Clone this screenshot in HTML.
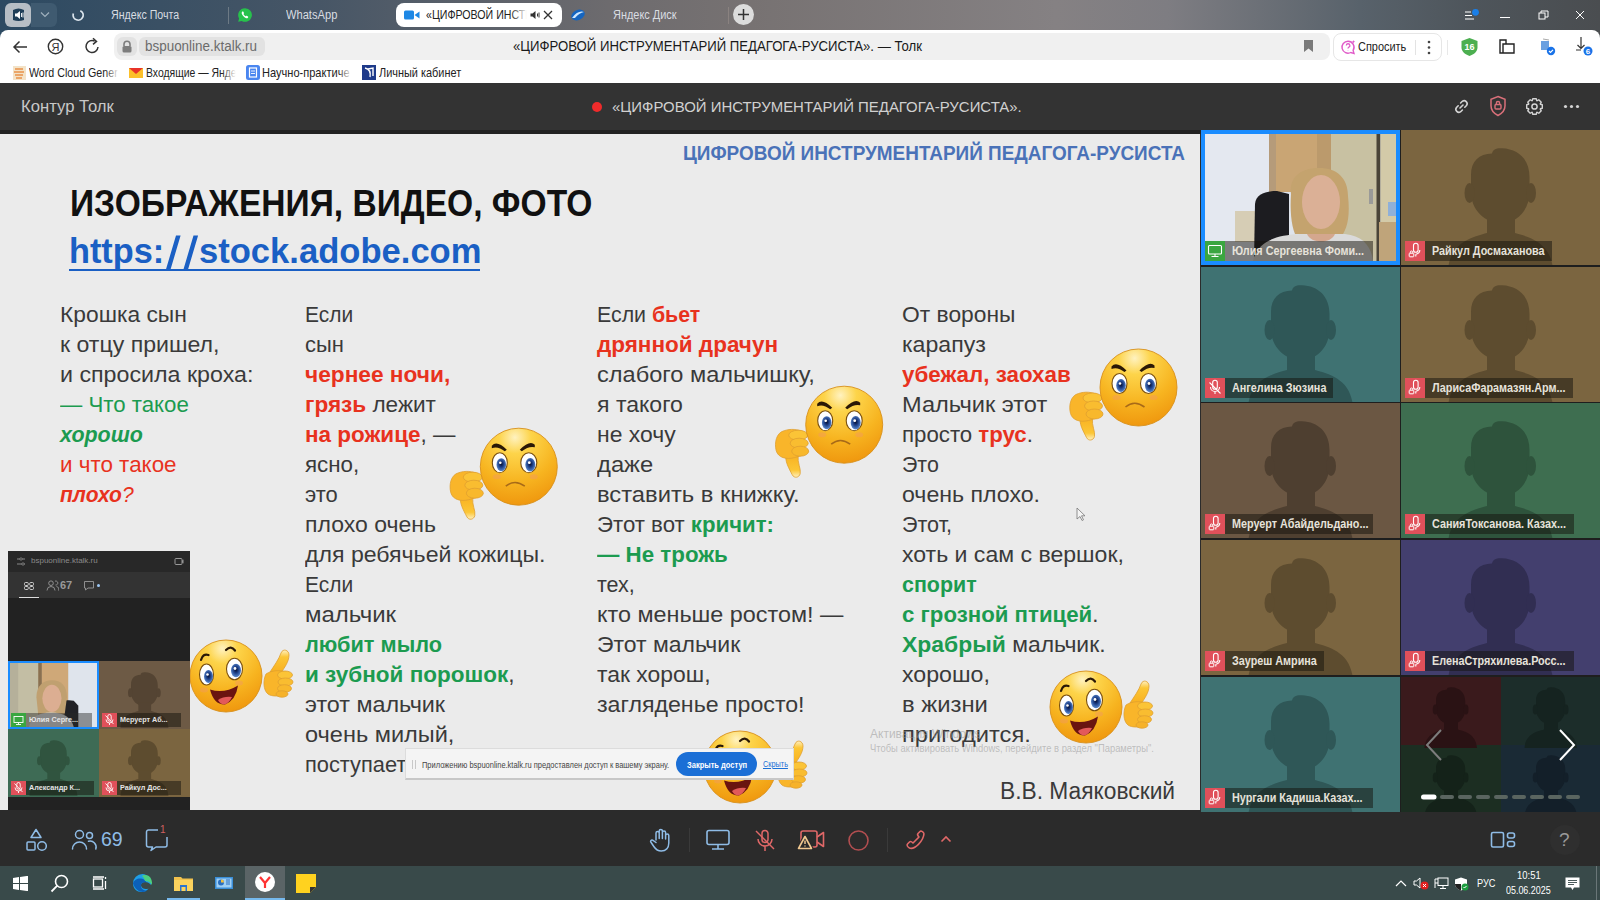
<!DOCTYPE html>
<html><head><meta charset="utf-8">
<style>
*{margin:0;padding:0;box-sizing:border-box}
html,body{width:1600px;height:900px;overflow:hidden;background:#2b2b2b;font-family:"Liberation Sans",sans-serif}
.abs{position:absolute}
#tabs{left:0;top:0;width:1600px;height:40px;background:linear-gradient(90deg,#2d4a62 0%,#475666 20%,#6d6b6e 38%,#777272 47%,#858183 66%,#7e7d82 73%,#58626b 85%,#4e555b 92%,#4a4d50 100%)}
.tab{position:absolute;top:0;height:30px;color:#d9dde2;font-size:12.5px;line-height:30px;white-space:nowrap;transform-origin:0 0}
#chrome{left:0;top:30px;width:1600px;height:53px;background:#fff;border-radius:8px 8px 0 0}
.bm{font-size:13px;line-height:20px;color:#222;white-space:nowrap;transform-origin:0 0}
#hdr{left:0;top:83px;width:1600px;height:47px;background:#333333}
#strip{left:0;top:130px;width:1201px;height:4px;background:#222}
#slide{left:0;top:134px;width:1200px;height:676px;background:#ebebeb;overflow:hidden}
.ln{position:absolute;white-space:nowrap;font-size:22.5px;line-height:0;color:#3a3a3a;transform-origin:0 0}
#grid{left:1201px;top:130px;width:399px;height:682px;background:#1e1e1e}
.lbl{font-size:12px;line-height:20.5px;font-weight:bold;color:#e6e2da;white-space:nowrap;transform:scaleX(0.9);transform-origin:0 0}
.mlbl{font-size:8px;line-height:14px;font-weight:bold;color:#e5e5e5;white-space:nowrap;transform:scaleX(0.9);transform-origin:0 0}
#toolbar{left:0;top:812px;width:1600px;height:54px;background:#2b2b2b}
#taskbar{left:0;top:866px;width:1600px;height:34px;background:#394a4a}
</style></head><body>
<svg width="0" height="0" style="position:absolute">
 <defs>
  <radialGradient id="fg" cx="0.45" cy="0.12" r="0.95">
   <stop offset="0" stop-color="#fff2c0"/>
   <stop offset="0.22" stop-color="#fdd44a"/>
   <stop offset="0.6" stop-color="#f7b420"/>
   <stop offset="0.9" stop-color="#f09a10"/>
   <stop offset="1" stop-color="#e88a0a"/>
  </radialGradient>
  <linearGradient id="hg" x1="0" y1="0" x2="0" y2="1">
   <stop offset="0" stop-color="#f8b020"/>
   <stop offset="0.7" stop-color="#fcc635"/>
   <stop offset="1" stop-color="#fff0c0"/>
  </linearGradient>
  <linearGradient id="hg2" x1="0" y1="1" x2="0" y2="0">
   <stop offset="0" stop-color="#f8b020"/>
   <stop offset="0.7" stop-color="#fcc635"/>
   <stop offset="1" stop-color="#fff0c0"/>
  </linearGradient>
  <radialGradient id="eyeg" cx="0.5" cy="0.45" r="0.55">
   <stop offset="0" stop-color="#081030"/>
   <stop offset="0.4" stop-color="#1a3a80"/>
   <stop offset="1" stop-color="#5a8ad0"/>
  </radialGradient>
  <g id="angry">
   <g stroke="#e0a030" stroke-width="0.8">
    <path d="M-58 29 C-60 36 -55 44 -52 50 C-50 54 -45 53 -44 49 C-43 44 -47 38 -46 31 Z" fill="url(#hg)"/>
    <path d="M-60 6 C-68 8 -70 18 -68 26 C-66 33 -58 35 -50 33 L-40 30 L-40 8 C-46 4 -54 4 -60 6Z" fill="#f9b52a"/>
    <ellipse cx="-46" cy="10.5" rx="9.5" ry="5" fill="#fbc437"/>
    <ellipse cx="-45" cy="18.5" rx="9" ry="5" fill="#f9bd30"/>
    <ellipse cx="-44" cy="26.5" rx="8.5" ry="5" fill="#f8b82c"/>
   </g>
   <circle r="38.5" fill="url(#fg)" stroke="#d8901a" stroke-width="0.9"/>
   <path d="M-27 -21 Q-22 -27 -12 -17 L-14 -15.5 Q-21 -21 -27 -18.5Z" fill="#2a1806"/>
   <path d="M16 -22 Q11 -27 1 -17 L3 -15.5 Q10 -21 16 -19.5Z" fill="#2a1806"/>
   <ellipse cx="-19" cy="-4" rx="7.5" ry="10" fill="#fff" stroke="#7a5010" stroke-width="1.1"/>
   <ellipse cx="10" cy="-4" rx="8" ry="10" fill="#fff" stroke="#7a5010" stroke-width="1.1"/>
   <ellipse cx="-17.5" cy="-2" rx="4.8" ry="6.5" fill="url(#eyeg)"/>
   <ellipse cx="11.5" cy="-2" rx="5" ry="6.8" fill="url(#eyeg)"/>
   <circle cx="-18.5" cy="-4" r="1.3" fill="#fff"/>
   <circle cx="10.5" cy="-4" r="1.4" fill="#fff"/>
   <ellipse cx="-22" cy="10" rx="4" ry="2.5" fill="#f29a60" opacity="0.45"/>
   <ellipse cx="15" cy="10" rx="4" ry="2.5" fill="#f29a60" opacity="0.45"/>
   <path d="M-13 19.5 Q-4 12 6 19.5" stroke="#a86a18" stroke-width="1.6" fill="none"/>
  </g>
  <g id="happy">
   <g stroke="#e0a030" stroke-width="0.8">
    <path d="M44 -4 C48 -10 53 -17 55 -23 C57 -28 63 -26 63 -21 C63 -14 58 -8 55 -3 Z" fill="url(#hg2)"/>
    <path d="M40 -2 C37 4 37 14 42 18 C46 21 54 20 58 19 L60 -4 C54 -6 46 -6 40 -2Z" fill="#f9b52a"/>
    <ellipse cx="59" cy="-1" rx="7.5" ry="4" fill="#fbc437"/>
    <ellipse cx="59.5" cy="6" rx="7.5" ry="4" fill="#f9bd30"/>
    <ellipse cx="58.5" cy="12.5" rx="7" ry="3.8" fill="#f8b82c"/>
    <ellipse cx="56" cy="18" rx="6" ry="3.2" fill="#f6b22a"/>
   </g>
   <circle r="36" fill="url(#fg)" stroke="#d8901a" stroke-width="0.9"/>
   <path d="M-25 -16 Q-23 -23 -17.5 -21" stroke="#2a1806" stroke-width="2.2" fill="none" stroke-linecap="round"/>
   <path d="M0 -26 Q5 -31 9 -25.5" stroke="#2a1806" stroke-width="2.2" fill="none" stroke-linecap="round"/>
   <ellipse cx="-19.5" cy="-1.5" rx="7" ry="10.5" fill="#fff" stroke="#7a5010" stroke-width="1.1"/>
   <ellipse cx="8.5" cy="-7" rx="8" ry="10.7" fill="#fff" stroke="#7a5010" stroke-width="1.1"/>
   <ellipse cx="-17.5" cy="0.5" rx="4.5" ry="6.5" fill="url(#eyeg)"/>
   <ellipse cx="10" cy="-5.5" rx="5" ry="6.7" fill="url(#eyeg)"/>
   <circle cx="-18.5" cy="-1.5" r="1.3" fill="#fff"/>
   <circle cx="9" cy="-7.5" r="1.4" fill="#fff"/>
   <ellipse cx="-22" cy="14" rx="4" ry="2.5" fill="#f29a60" opacity="0.45"/>
   <ellipse cx="13" cy="7" rx="4" ry="2.5" fill="#f29a60" opacity="0.45"/>
   <path d="M-16 13.5 Q-2 18 12 9.5 Q10 24 -1 28.5 Q-12 29 -16 13.5Z" fill="#6a1410"/>
   <path d="M-8 24 Q-2 20 6 21 Q3 27.5 -2 28.5 Q-6 28 -8 24Z" fill="#e25a5a"/>
  </g>
 </defs>
</svg>

<!-- TAB BAR -->
<div id="tabs" class="abs">
 <div class="abs" style="left:5px;top:3px;width:26px;height:24px;background:#b7bec5;border-radius:6px"></div>
 <div class="abs" style="left:31px;top:3px;width:26px;height:24px;background:#3f5a70;border-radius:0 6px 6px 0"></div>
 <svg class="abs" style="left:11px;top:8px" width="15" height="14" viewBox="0 0 15 14"><path d="M2 2 Q7.5 -1 13 2 L13 12 Q7.5 14 2 12Z" fill="#1f3e57"/><path d="M4 5.5h2l3-2.5v8l-3-2.5h-2z" fill="#fff"/><path d="M10.5 5v4M12 4.5v5" stroke="#fff" stroke-width="0.9"/></svg>
 <svg class="abs" style="left:40px;top:11px" width="10" height="7" viewBox="0 0 10 7"><path d="M1 1.5l4 4 4-4" stroke="#9fb0bd" stroke-width="1.2" fill="none"/></svg>
 <svg class="abs" style="left:72px;top:9px" width="13" height="13" viewBox="0 0 13 13"><path d="M10.5 3.2A5 5 0 1 1 3 2.3" stroke="#dde6ee" stroke-width="1.7" fill="none" transform="rotate(-30 6.5 6.5)"/></svg>
 <div class="tab" style="left:111px;top:0;transform:scaleX(0.85)">Яндекс Почта</div>
 <div class="abs" style="left:228px;top:7px;width:1px;height:17px;background:#6d7a85"></div>
 <svg class="abs" style="left:237px;top:7px" width="16" height="16" viewBox="0 0 16 16"><path d="M8 1.2a6.8 6.8 0 0 0-5.9 10.2L1.2 14.8l3.5-.9A6.8 6.8 0 1 0 8 1.2z" fill="#27c24c"/><path d="M5.3 4.6c.3-.3.7-.3.9 0l.8 1.3c.1.3 0 .5-.2.7l-.4.4c.4.9 1.2 1.8 2.2 2.3l.4-.4c.2-.2.5-.3.7-.1l1.3.7c.3.2.3.6.1.9-.6.9-1.5 1.1-2.4.6-1.7-.9-3-2.2-3.8-3.9-.4-.9-.2-1.8.4-2.5z" fill="#fff"/></svg>
 <div class="tab" style="left:286px;top:0;transform:scaleX(0.89)">WhatsApp</div>
 <div class="abs" style="left:396px;top:3px;width:166px;height:24px;background:#fff;border-radius:8px"></div>
 <svg class="abs" style="left:404px;top:10px" width="16" height="10" viewBox="0 0 16 10"><rect x="0" y="0.5" width="10" height="9" rx="1.5" fill="#1e88e5"/><path d="M10.5 5l5-3.5v7z" fill="#1e88e5"/></svg>
 <div class="tab" style="left:426px;top:0;color:#222;width:118px;overflow:hidden;transform:scaleX(0.85)">«ЦИФРОВОЙ ИНСТРУМЕНТАРИЙ</div>
 <div class="abs" style="left:510px;top:5px;width:18px;height:20px;background:linear-gradient(90deg,rgba(255,255,255,0),#fff)"></div>
 <svg class="abs" style="left:530px;top:10px" width="11" height="10" viewBox="0 0 11 10"><path d="M0.5 3.5h2l3-2.5v8l-3-2.5h-2z" fill="#333"/><path d="M7.5 3.5v3M9 2.5v5" stroke="#333" stroke-width="1"/></svg>
 <svg class="abs" style="left:543px;top:10px" width="10" height="10" viewBox="0 0 10 10"><path d="M1 1l8 8M9 1l-8 8" stroke="#333" stroke-width="1.3"/></svg>
 <svg class="abs" style="left:570px;top:8px" width="16" height="14" viewBox="0 0 16 14"><ellipse cx="8" cy="7" rx="7" ry="5" fill="#1565c0" transform="rotate(-25 8 7)"/><path d="M2 10 Q8 2 14 4 Q9 5 5 10z" fill="#cfe8ff"/></svg>
 <div class="tab" style="left:613px;top:0;transform:scaleX(0.875)">Яндекс Диск</div>
 <div class="abs" style="left:728px;top:7px;width:1px;height:17px;background:#8a8280"></div>
 <div class="abs" style="left:733px;top:4px;width:21px;height:21px;background:#dcdcdc;border-radius:50%"></div>
 <svg class="abs" style="left:737px;top:8px" width="13" height="13" viewBox="0 0 13 13"><path d="M6.5 1v11M1 6.5h11" stroke="#333" stroke-width="1.5"/></svg>
 <svg class="abs" style="left:1463px;top:8px" width="20" height="14" viewBox="0 0 20 14"><path d="M2 4h6M2 7.5h7M2 11h9" stroke="#fff" stroke-width="1.2"/><circle cx="12.5" cy="4.3" r="3.4" fill="#1a7fe8"/></svg>
 <div class="abs" style="left:1500px;top:17px;width:10px;height:1.3px;background:#fff"></div>
 <svg class="abs" style="left:1538px;top:10px" width="11" height="10" viewBox="0 0 11 10"><rect x="1" y="3" width="6" height="6" fill="none" stroke="#fff" stroke-width="1"/><path d="M3 3V1h7v6H7" fill="none" stroke="#fff" stroke-width="1"/></svg>
 <svg class="abs" style="left:1575px;top:10px" width="10" height="10" viewBox="0 0 10 10"><path d="M1 1l8 8M9 1L1 9" stroke="#fff" stroke-width="1"/></svg>
</div>
<!-- ADDRESS + BOOKMARKS -->
<div id="chrome" class="abs">
 <svg class="abs" style="left:12px;top:10px" width="16" height="14" viewBox="0 0 16 14"><path d="M15 7H2M7.5 1.5L2 7l5.5 5.5" stroke="#333" stroke-width="1.5" fill="none"/></svg>
 <svg class="abs" style="left:47px;top:8px" width="17" height="17" viewBox="0 0 17 17"><circle cx="8.5" cy="8.5" r="7.2" fill="none" stroke="#333" stroke-width="1.4"/><text x="8.5" y="12.6" font-size="11" text-anchor="middle" fill="#333" font-family="Liberation Sans">Я</text></svg>
 <svg class="abs" style="left:84px;top:7px" width="17" height="18" viewBox="0 0 17 18"><path d="M14 10a6 6 0 1 1-3.2-5.8" stroke="#333" stroke-width="1.5" fill="none"/><path d="M9 1.2l3.5 3.2-3.5 3" stroke="#333" stroke-width="1.5" fill="none"/></svg>
 <div class="abs" style="left:114px;top:3px;width:1216px;height:27px;background:#f0f0f0;border-radius:8px"></div>
 <div class="abs" style="left:117px;top:7px;width:20px;height:19px;background:#e2e2e2;border-radius:6px"></div>
 <svg class="abs" style="left:121px;top:10px" width="12" height="13" viewBox="0 0 12 13"><path d="M3 6V4.2a3 3 0 0 1 6 0V6" stroke="#7d7d7d" stroke-width="1.6" fill="none"/><rect x="1.5" y="6" width="9" height="6.5" rx="1.5" fill="#7d7d7d"/></svg>
 <div class="abs" style="left:139px;top:7px;width:126px;height:19px;background:#e2e2e2;border-radius:6px"></div>
 <div class="abs" style="left:145px;top:7px;font-size:14px;line-height:19px;color:#6b6b6b;white-space:nowrap;transform:scaleX(0.96);transform-origin:0 0">bspuonline.ktalk.ru</div>
 <div class="abs" style="left:513px;top:4.5px;font-size:15.5px;line-height:21px;color:#1a1a1a;white-space:nowrap;transform:scaleX(0.849);transform-origin:0 0">«ЦИФРОВОЙ ИНСТРУМЕНТАРИЙ ПЕДАГОГА-РУСИСТА». — Толк</div>
 <svg class="abs" style="left:1303px;top:9px" width="11" height="14" viewBox="0 0 11 14"><path d="M1 1h9v12l-4.5-3.5L1 13z" fill="#7a7a7a"/></svg>
 <div class="abs" style="left:1333px;top:3px;width:109px;height:28px;background:#fff;border:1px solid #e6e6e6;border-radius:8px"></div>
 <svg class="abs" style="left:1340px;top:9px" width="17" height="17" viewBox="0 0 17 17"><path d="M8 2.2a6 6 0 1 0 2.8 11.3l3.2.9-.9-3A6 6 0 0 0 8 2.2z" fill="none" stroke="#e05ac8" stroke-width="1.4"/><path d="M6.3 6.5a1.8 1.8 0 1 1 2.5 1.7c-.5.3-.8.6-.8 1.3M8 11.2v.3" stroke="#e05ac8" stroke-width="1.3" fill="none"/><path d="M13.5 1l.5 1.3 1.3.5-1.3.5-.5 1.3-.5-1.3-1.3-.5 1.3-.5z" fill="#e05ac8"/></svg>
 <div class="abs" style="left:1358px;top:7px;font-size:13.5px;line-height:19px;color:#222;white-space:nowrap;transform:scaleX(0.81);transform-origin:0 0">Спросить</div>
 <div class="abs" style="left:1415px;top:10px;width:1px;height:15px;background:#e3e3e3"></div>
 <svg class="abs" style="left:1427px;top:10px" width="4" height="15" viewBox="0 0 4 15"><circle cx="2" cy="2" r="1.3" fill="#444"/><circle cx="2" cy="7.5" r="1.3" fill="#444"/><circle cx="2" cy="13" r="1.3" fill="#444"/></svg>
 <div class="abs" style="left:1447px;top:10px;width:1px;height:15px;background:#e8e8e8"></div>
 <svg class="abs" style="left:1460px;top:7px" width="19" height="20" viewBox="0 0 19 20"><path d="M9.5 1l8 3v6.5c0 4-3.5 7-8 8.5C5 17.5 1.5 14.5 1.5 10.5V4z" fill="#4caf50"/><text x="9.5" y="12.5" font-size="9" font-weight="bold" text-anchor="middle" fill="#fff" font-family="Liberation Sans">16</text></svg>
 <svg class="abs" style="left:1498px;top:8px" width="18" height="17" viewBox="0 0 18 17"><path d="M2 2h6v4H5v9H2z M8 6h8v9H5" fill="none" stroke="#222" stroke-width="1.4"/></svg>
 <svg class="abs" style="left:1538px;top:6px" width="20" height="20" viewBox="0 0 20 20"><rect x="3" y="5" width="8" height="9" fill="#6aa0e0"/><path d="M5 3l6 1" stroke="#aaa"/><circle cx="13" cy="15" r="4.2" fill="#1a73e8"/><path d="M11 15l1.5 1.4 2.5-2.6" stroke="#fff" stroke-width="1.2" fill="none"/></svg>
 <svg class="abs" style="left:1575px;top:6px" width="20" height="22" viewBox="0 0 20 22"><path d="M6 1v11M2.5 9l3.5 3.5L9.5 9M1 14h5" stroke="#333" stroke-width="1.2" fill="none"/><circle cx="13" cy="15" r="4.5" fill="#1a73e8"/><text x="13" y="18.2" font-size="8" font-weight="bold" text-anchor="middle" fill="#fff" font-family="Liberation Sans">6</text></svg>
 <!-- bookmarks -->
 <svg class="abs" style="left:13px;top:36px" width="13" height="14" viewBox="0 0 13 14"><rect x="0" y="0" width="13" height="14" fill="#f3e3c8"/><path d="M2 3h8M1 6h10M2 9h8M3 12h6" stroke="#e9924a" stroke-width="1.6"/></svg>
 <div class="abs bm" style="left:29px;top:33px;width:108px;overflow:hidden;transform:scaleX(0.82)">Word Cloud Generator</div>
 <div class="abs" style="left:105px;top:35px;width:14px;height:16px;background:linear-gradient(90deg,rgba(255,255,255,0),#fff)"></div>
 <svg class="abs" style="left:129px;top:38px" width="14" height="10" viewBox="0 0 14 10"><rect width="14" height="10" fill="#fcc02a"/><path d="M0 0l7 6 7-6z" fill="#e8332a"/></svg>
 <div class="abs bm" style="left:146px;top:33px;width:112px;overflow:hidden;transform:scaleX(0.8)">Входящие — Яндекс Почта</div>
 <div class="abs" style="left:222px;top:35px;width:14px;height:16px;background:linear-gradient(90deg,rgba(255,255,255,0),#fff)"></div>
 <svg class="abs" style="left:246px;top:35px" width="14" height="15" viewBox="0 0 14 15"><rect x="0" y="0" width="14" height="15" rx="2.5" fill="#4a86f0"/><rect x="3.5" y="3" width="7" height="9" fill="none" stroke="#fff" stroke-width="1.2"/><path d="M5 6h4M5 8.5h4" stroke="#fff" stroke-width="0.9"/></svg>
 <div class="abs bm" style="left:262px;top:33px;width:103px;overflow:hidden;transform:scaleX(0.85)">Научно-практическая</div>
 <div class="abs" style="left:338px;top:35px;width:14px;height:16px;background:linear-gradient(90deg,rgba(255,255,255,0),#fff)"></div>
 <svg class="abs" style="left:362px;top:35px" width="14" height="15" viewBox="0 0 14 15"><rect width="14" height="15" fill="#1e3a8a"/><path d="M3 3c4 1 6 4 5 9M6 4l5-1v8" stroke="#fff" stroke-width="1.4" fill="none"/></svg>
 <div class="abs bm" style="left:379px;top:33px;transform:scaleX(0.84)">Личный кабинет</div>
</div>
<!-- KONTUR HEADER -->
<div id="hdr" class="abs">
 <div class="abs" style="left:21px;top:22.8px;font-size:16.5px;line-height:0;color:#c8c8c8;white-space:nowrap;transform:scaleX(1.01);transform-origin:0 0">Контур Толк</div>
 <div class="abs" style="left:592px;top:19px;width:10px;height:10px;border-radius:50%;background:#ef2b2b"></div>
 <div class="abs" style="left:612px;top:23.5px;font-size:14.5px;line-height:0;color:#d0d0d0;white-space:nowrap;transform:scaleX(1.03);transform-origin:0 0">«ЦИФРОВОЙ ИНСТРУМЕНТАРИЙ ПЕДАГОГА-РУСИСТА».</div>
 <svg class="abs" style="left:1452px;top:14px" width="19" height="19" viewBox="0 0 19 19"><path d="M8 11l3-3M6.2 8.8L4.5 10.5a3 3 0 0 0 4.2 4.2l1.7-1.7M12.8 10.2l1.7-1.7a3 3 0 0 0-4.2-4.2L8.6 6" stroke="#d4d4d4" stroke-width="1.6" fill="none" stroke-linecap="round"/></svg>
 <svg class="abs" style="left:1489px;top:12px" width="18" height="22" viewBox="0 0 18 22"><path d="M9 1.5l7 2.8v6.5c0 4.5-3 7.7-7 9.7-4-2-7-5.2-7-9.7V4.3z" fill="none" stroke="#d9707a" stroke-width="1.5"/><rect x="6" y="9.5" width="6" height="4.5" rx="1" fill="none" stroke="#d9707a" stroke-width="1.4"/><path d="M7.3 9.5V8.2a1.7 1.7 0 0 1 3.4 0v1.3" stroke="#d9707a" stroke-width="1.3" fill="none"/></svg>
 <svg class="abs" style="left:1525px;top:14px" width="19" height="19" viewBox="0 0 19 19"><path d="M15.40 7.28 L17.31 7.75 L17.31 11.25 L15.40 11.72 L15.24 12.10 L16.26 13.79 L13.79 16.26 L12.10 15.24 L11.72 15.40 L11.25 17.31 L7.75 17.31 L7.28 15.40 L6.90 15.24 L5.21 16.26 L2.74 13.79 L3.76 12.10 L3.60 11.72 L1.69 11.25 L1.69 7.75 L3.60 7.28 L3.76 6.90 L2.74 5.21 L5.21 2.74 L6.90 3.76 L7.28 3.60 L7.75 1.69 L11.25 1.69 L11.72 3.60 L12.10 3.76 L13.79 2.74 L16.26 5.21 L15.24 6.90Z" fill="none" stroke="#d4d4d4" stroke-width="1.4" stroke-linejoin="round"/><circle cx="9.5" cy="9.5" r="2.6" fill="none" stroke="#d4d4d4" stroke-width="1.5"/></svg>
 <svg class="abs" style="left:1563px;top:21px" width="18" height="5" viewBox="0 0 18 5"><circle cx="2.5" cy="2.5" r="1.6" fill="#d4d4d4"/><circle cx="8.5" cy="2.5" r="1.6" fill="#d4d4d4"/><circle cx="14.5" cy="2.5" r="1.6" fill="#d4d4d4"/></svg>
</div>

<div id="strip" class="abs"></div>
<!-- SLIDE -->
<div id="slide" class="abs">
 <div class="abs" style="left:683px;top:19.3px;font-size:21px;line-height:0;font-weight:bold;white-space:nowrap;transform:scaleX(0.902);transform-origin:0 0;color:#4a72b8">ЦИФРОВОЙ ИНСТРУМЕНТАРИЙ ПЕДАГОГА-РУСИСТА</div>
 <div class="abs" style="left:69.5px;top:69.0px;font-size:37.5px;line-height:0;font-weight:bold;white-space:nowrap;transform:scaleX(0.895);transform-origin:0 0;color:#111">ИЗОБРАЖЕНИЯ, ВИДЕО, ФОТО</div>
 <div class="abs" style="left:69px;top:116.9px;font-size:35px;line-height:0;font-weight:bold;white-space:nowrap;transform:scaleX(0.98);transform-origin:0 0;color:#1a5fc4">https:</div>
 <div class="abs" style="left:198.8px;top:116.9px;font-size:35px;line-height:0;font-weight:bold;white-space:nowrap;transform:scaleX(0.988);transform-origin:0 0;color:#1a5fc4">stock.adobe.com</div>
 <svg class="abs" style="left:160px;top:100px" width="45" height="40" viewBox="160 234 45 40"><path d="M166 269.2L170.6 269.2L180.6 235.6L176 235.6Z M183.5 269.2L188.1 269.2L198.1 235.6L193.5 235.6Z" fill="#1a5fc4"/></svg>
 <div class="abs" style="left:69px;top:134.5px;width:411px;height:2.3px;background:#1a5fc4"></div>
<div class="ln" style="left:60px;top:180.5px;transform:scaleX(1.013)">Крошка сын</div>
<div class="ln" style="left:60px;top:210.5px;transform:scaleX(1.027)">к отцу пришел,</div>
<div class="ln" style="left:60px;top:240.5px;transform:scaleX(1.032)">и спросила кроха:</div>
<div class="ln" style="left:60px;top:270.5px;transform:scaleX(0.989)"><span style="color:#1c9b50">— Что такое</span></div>
<div class="ln" style="left:60px;top:300.5px;transform:scaleX(0.953)"><span style="color:#1c9b50;font-weight:bold;font-style:italic">хорошо</span></div>
<div class="ln" style="left:60px;top:330.5px;transform:scaleX(0.996)"><span style="color:#e8321e">и что такое</span></div>
<div class="ln" style="left:60px;top:360.5px;transform:scaleX(0.934)"><span style="color:#e8321e;font-weight:bold;font-style:italic">плохо</span><span style="color:#e8321e;font-style:italic">?</span></div>
<div class="ln" style="left:305px;top:180.5px;transform:scaleX(0.930)">Если</div>
<div class="ln" style="left:305px;top:210.5px;transform:scaleX(0.975)">сын</div>
<div class="ln" style="left:305px;top:240.5px;transform:scaleX(1.008)"><span style="color:#e8321e;font-weight:bold">чернее ночи,</span></div>
<div class="ln" style="left:305px;top:270.5px;transform:scaleX(1.003)"><span style="color:#e8321e;font-weight:bold">грязь</span> лежит</div>
<div class="ln" style="left:305px;top:300.5px;transform:scaleX(0.998)"><span style="color:#e8321e;font-weight:bold">на рожице</span>, —</div>
<div class="ln" style="left:305px;top:330.5px;transform:scaleX(0.992)">ясно,</div>
<div class="ln" style="left:305px;top:360.5px;transform:scaleX(0.975)">это</div>
<div class="ln" style="left:305px;top:390.5px;transform:scaleX(1.023)">плохо очень</div>
<div class="ln" style="left:305px;top:420.5px;transform:scaleX(1.027)">для ребячьей кожицы.</div>
<div class="ln" style="left:305px;top:450.5px;transform:scaleX(0.930)">Если</div>
<div class="ln" style="left:305px;top:480.5px;transform:scaleX(1.065)">мальчик</div>
<div class="ln" style="left:305px;top:510.5px;transform:scaleX(0.966)"><span style="color:#1c9b50;font-weight:bold">любит мыло</span></div>
<div class="ln" style="left:305px;top:540.5px;transform:scaleX(1.001)"><span style="color:#1c9b50;font-weight:bold">и зубной порошок</span>,</div>
<div class="ln" style="left:305px;top:570.5px;transform:scaleX(1.037)">этот мальчик</div>
<div class="ln" style="left:305px;top:600.5px;transform:scaleX(1.046)">очень милый,</div>
<div class="ln" style="left:305px;top:630.5px;transform:scaleX(0.970)">поступает хорошо.</div>
<div class="ln" style="left:597px;top:180.5px;transform:scaleX(0.948)">Если <span style="color:#e8321e;font-weight:bold">бьет</span></div>
<div class="ln" style="left:597px;top:210.5px;transform:scaleX(1.000)"><span style="color:#e8321e;font-weight:bold">дрянной драчун</span></div>
<div class="ln" style="left:597px;top:240.5px;transform:scaleX(1.048)">слабого мальчишку,</div>
<div class="ln" style="left:597px;top:270.5px;transform:scaleX(1.025)">я такого</div>
<div class="ln" style="left:597px;top:300.5px;transform:scaleX(1.020)">не хочу</div>
<div class="ln" style="left:597px;top:330.5px;transform:scaleX(1.057)">даже</div>
<div class="ln" style="left:597px;top:360.5px;transform:scaleX(1.056)">вставить в книжку.</div>
<div class="ln" style="left:597px;top:390.5px;transform:scaleX(0.987)">Этот вот <span style="color:#1c9b50;font-weight:bold">кричит:</span></div>
<div class="ln" style="left:597px;top:420.5px;transform:scaleX(0.993)"><span style="color:#1c9b50;font-weight:bold">— Не трожь</span></div>
<div class="ln" style="left:597px;top:450.5px;transform:scaleX(0.956)">тех,</div>
<div class="ln" style="left:597px;top:480.5px;transform:scaleX(1.039)">кто меньше ростом! —</div>
<div class="ln" style="left:597px;top:510.5px;transform:scaleX(1.021)">Этот мальчик</div>
<div class="ln" style="left:597px;top:540.5px;transform:scaleX(1.018)">так хорош,</div>
<div class="ln" style="left:597px;top:570.5px;transform:scaleX(1.029)">загляденье просто!</div>
<div class="ln" style="left:902px;top:180.5px;transform:scaleX(1.014)">От вороны</div>
<div class="ln" style="left:902px;top:210.5px;transform:scaleX(1.027)">карапуз</div>
<div class="ln" style="left:902px;top:240.5px;transform:scaleX(0.995)"><span style="color:#e8321e;font-weight:bold">убежал, заохав</span></div>
<div class="ln" style="left:902px;top:270.5px;transform:scaleX(1.048)">Мальчик этот</div>
<div class="ln" style="left:902px;top:300.5px;transform:scaleX(0.988)">просто <span style="color:#e8321e;font-weight:bold">трус</span>.</div>
<div class="ln" style="left:902px;top:330.5px;transform:scaleX(0.950)">Это</div>
<div class="ln" style="left:902px;top:360.5px;transform:scaleX(1.028)">очень плохо.</div>
<div class="ln" style="left:902px;top:390.5px;transform:scaleX(0.958)">Этот,</div>
<div class="ln" style="left:902px;top:420.5px;transform:scaleX(1.025)">хоть и сам с вершок,</div>
<div class="ln" style="left:902px;top:450.5px;transform:scaleX(0.952)"><span style="color:#1c9b50;font-weight:bold">спорит</span></div>
<div class="ln" style="left:902px;top:480.5px;transform:scaleX(0.988)"><span style="color:#1c9b50;font-weight:bold">с грозной птицей</span>.</div>
<div class="ln" style="left:902px;top:510.5px;transform:scaleX(1.018)"><span style="color:#1c9b50;font-weight:bold">Храбрый</span> мальчик.</div>
<div class="ln" style="left:902px;top:540.5px;transform:scaleX(1.030)">хорошо,</div>
<div class="ln" style="left:902px;top:570.5px;transform:scaleX(1.059)">в жизни</div>
<div class="ln" style="left:902px;top:600.5px;transform:scaleX(1.052)">пригодится.</div>
 <div class="abs" style="left:1000px;top:656.5px;font-size:23px;line-height:0;white-space:nowrap;transform:scaleX(0.99);transform-origin:0 0;color:#3a3a3a">В.В. Маяковский</div>
 <div class="abs" style="left:870px;top:599.8px;font-size:12px;line-height:0;white-space:nowrap;transform:scaleX(1);transform-origin:0 0;color:rgba(150,150,150,0.55)">Активация Windows</div>
 <div class="abs" style="left:870px;top:614.5px;font-size:10px;line-height:0;white-space:nowrap;transform:scaleX(0.94);transform-origin:0 0;color:rgba(150,150,150,0.55)">Чтобы активировать Windows, перейдите в раздел "Параметры".</div>
</div>
<!-- EMOJIS -->
<svg class="abs" style="left:0;top:134px" width="1200" height="676" viewBox="0 134 1200 676">
 <use href="#angry" transform="translate(518.8 466.7) scale(1)"/>
 <use href="#angry" transform="translate(844.2 424.7) scale(1)"/>
 <use href="#angry" transform="translate(1138.5 387.5) scale(1)"/>
 <use href="#happy" transform="translate(226 676) scale(1)"/>
 <use href="#happy" transform="translate(1086 707) scale(1)"/>
 <use href="#happy" transform="translate(740 767) scale(1)"/>
</svg>
<!-- cursor -->
<svg class="abs" style="left:1076px;top:507px" width="10" height="15" viewBox="0 0 10 15"><path d="M1 1v11l3-2.5 2 4 1.5-.7-2-4H9z" fill="#f4f4f4" stroke="#777" stroke-width="0.8"/></svg>
<!-- NOTIFICATION BAR -->
<div class="abs" style="left:405px;top:748px;width:389px;height:32px;background:#f4f4f4;border:1px solid #dcdcdc;border-bottom:2px solid #c8c8c8">
 <div class="abs" style="left:6px;top:11px;width:4px;height:9px;border-left:1px solid #c8c8c8;border-right:1px solid #c8c8c8"></div>
 <div class="abs" style="left:16px;top:16px;font-size:8.6px;line-height:0;color:#444;white-space:nowrap;transform:scaleX(0.87);transform-origin:0 0">Приложению bspuonline.ktalk.ru предоставлен доступ к вашему экрану.</div>
 <div class="abs" style="left:270px;top:3px;width:81px;height:24px;background:#1b6fd6;border-radius:12px"></div>
 <div class="abs" style="left:281px;top:15.5px;font-size:8.6px;line-height:0;font-weight:bold;color:#fff;white-space:nowrap;transform:scaleX(0.875);transform-origin:0 0">Закрыть доступ</div>
 <div class="abs" style="left:357px;top:10px;font-size:8.6px;line-height:11px;color:#1b6fd6;text-decoration:underline;white-space:nowrap;transform:scaleX(0.85);transform-origin:0 0">Скрыть</div>
</div>

<!-- PARTICIPANTS GRID -->
<div id="grid" class="abs">
<div class="abs" style="left:0px;top:0px;width:199px;height:135px;background:#1a8cff">
 <svg class="abs" style="left:4px;top:4px" width="191" height="127" viewBox="0 0 191 127">
  <rect width="191" height="127" fill="#dfe4ec"/>
  <rect x="0" y="0" width="65" height="127" fill="#e4e8f0"/>
  <rect x="64" y="0" width="7" height="127" fill="#b59b7a"/>
  <rect x="71" y="0" width="42" height="58" fill="#c9a574"/>
  <rect x="112" y="0" width="14" height="127" fill="#bb9a6c"/>
  <rect x="126" y="0" width="46" height="127" fill="#c8c1a2"/>
  <rect x="171.5" y="0" width="4" height="127" fill="#4a4438"/>
  <rect x="175.5" y="0" width="15.5" height="127" fill="#d3caa8"/>
  <rect x="174" y="88" width="17" height="39" fill="#bfa47a"/>
  <rect x="183" y="68" width="8" height="14" fill="#8fb0d8"/>
  <rect x="164" y="55" width="4" height="15" fill="#9a9a98"/>
  <rect x="30" y="77" width="20" height="31" fill="#d6cdb5"/>
  <path d="M49 127 L50 70 C51 60 60 57 72 57 L84 60 L84 127Z" fill="#1c1c20"/>
  <path d="M86 60 C84 42 97 34 114 34 C132 34 143 44 143 62 C145 80 143 92 138 100 L90 100 C86 90 85 75 86 60Z" fill="#c4a36e"/>
  <ellipse cx="116" cy="68" rx="19" ry="27" fill="#dbb096"/>
  <path d="M48 127 C52 108 70 101 95 100 L140 100 C158 102 166 112 168 127Z" fill="#dadada"/>
  <path d="M102 100 C106 110 126 110 130 100Z" fill="#d4a78e"/>
 </svg>

 <svg class="abs" style="left:4px;top:111.3px" width="20" height="20" viewBox="0 0 20 20"><rect width="20" height="20" fill="#3aa640"/><rect x="3.5" y="4.5" width="13" height="8.5" rx="1" fill="none" stroke="#fff" stroke-width="1.1"/><path d="M10 13v2.5M6.5 15.5h7" stroke="#fff" stroke-width="1.1"/></svg>
 <div class="abs" style="left:24px;top:111.3px;width:148px;height:20px;background:rgba(20,18,12,0.5)"></div>
 <div class="abs lbl" style="left:31px;top:111.3px">Юлия Сергеевна Фоми...</div>
</div>
<div class="abs" style="left:200px;top:0px;width:199px;height:135px;background:#7b6540;overflow:hidden">
 <svg class="abs" style="left:0;top:0" width="199" height="136" viewBox="0 0 199 136"><g transform="translate(0 0) scale(1.0)" fill="#5d4c2f"><path d="M70 45C70 31 78 24 91 23.5C92 19.5 95 18 101 18.3C117 19 128.5 29 128.5 47L128.5 62C128.5 80 116 93 100 93C84 93 70 80 70 62Z"/><ellipse cx="68.5" cy="63" rx="5" ry="10"/><ellipse cx="130" cy="63" rx="5" ry="10"/><path d="M86 84L114 84L114 103C128 107 150 112 152 140L47 140C49 112 72 107 86 103Z"/></g></svg>

 <svg class="abs" style="left:4px;top:111.3px" width="20" height="20" viewBox="0 0 20 20"><rect width="20" height="20" fill="#e0505a"/><path d="M8.5 4.5a2.3 2.3 0 0 1 4.6 0v4.5a2.3 2.3 0 0 1-4.6 0z" fill="none" stroke="#fff" stroke-width="1.1"/><path d="M14.8 9a4 4 0 0 1-4 4.2M10.8 13.2v2.3" fill="none" stroke="#fff" stroke-width="1.1"/><rect x="4.2" y="12.2" width="4.6" height="3.6" rx="0.6" fill="none" stroke="#fff" stroke-width="1"/><path d="M5.3 12.2v-1a1.2 1.2 0 0 1 2.4 0v1" fill="none" stroke="#fff" stroke-width="1"/></svg>
 <div class="abs" style="left:24px;top:111.3px;width:127px;height:20px;background:rgba(20,18,12,0.5)"></div>
 <div class="abs lbl" style="left:31px;top:111.3px">Райкул Досмаханова</div>
</div>
<div class="abs" style="left:0px;top:137px;width:199px;height:135px;background:#3f7272;overflow:hidden">
 <svg class="abs" style="left:0;top:0" width="199" height="136" viewBox="0 0 199 136"><g transform="translate(0 0) scale(1.0)" fill="#2f5757"><path d="M70 45C70 31 78 24 91 23.5C92 19.5 95 18 101 18.3C117 19 128.5 29 128.5 47L128.5 62C128.5 80 116 93 100 93C84 93 70 80 70 62Z"/><ellipse cx="68.5" cy="63" rx="5" ry="10"/><ellipse cx="130" cy="63" rx="5" ry="10"/><path d="M86 84L114 84L114 103C128 107 150 112 152 140L47 140C49 112 72 107 86 103Z"/></g></svg>

 <svg class="abs" style="left:4px;top:111.3px" width="20" height="20" viewBox="0 0 20 20"><rect width="20" height="20" fill="#e0505a"/><path d="M7.7 4.5a2.3 2.3 0 0 1 4.6 0v4.5a2.3 2.3 0 0 1-4.6 0z" fill="none" stroke="#fff" stroke-width="1.1"/><path d="M5.5 9a4.5 4.5 0 0 0 9 0M10 13.5v2.5" fill="none" stroke="#fff" stroke-width="1.1"/><path d="M4.5 4.5l11 11" stroke="#fff" stroke-width="1.1"/></svg>
 <div class="abs" style="left:24px;top:111.3px;width:108px;height:20px;background:rgba(20,18,12,0.5)"></div>
 <div class="abs lbl" style="left:31px;top:111.3px">Ангелина Зюзина</div>
</div>
<div class="abs" style="left:200px;top:137px;width:199px;height:135px;background:#7b6540;overflow:hidden">
 <svg class="abs" style="left:0;top:0" width="199" height="136" viewBox="0 0 199 136"><g transform="translate(0 0) scale(1.0)" fill="#5d4c2f"><path d="M70 45C70 31 78 24 91 23.5C92 19.5 95 18 101 18.3C117 19 128.5 29 128.5 47L128.5 62C128.5 80 116 93 100 93C84 93 70 80 70 62Z"/><ellipse cx="68.5" cy="63" rx="5" ry="10"/><ellipse cx="130" cy="63" rx="5" ry="10"/><path d="M86 84L114 84L114 103C128 107 150 112 152 140L47 140C49 112 72 107 86 103Z"/></g></svg>

 <svg class="abs" style="left:4px;top:111.3px" width="20" height="20" viewBox="0 0 20 20"><rect width="20" height="20" fill="#e0505a"/><path d="M8.5 4.5a2.3 2.3 0 0 1 4.6 0v4.5a2.3 2.3 0 0 1-4.6 0z" fill="none" stroke="#fff" stroke-width="1.1"/><path d="M14.8 9a4 4 0 0 1-4 4.2M10.8 13.2v2.3" fill="none" stroke="#fff" stroke-width="1.1"/><rect x="4.2" y="12.2" width="4.6" height="3.6" rx="0.6" fill="none" stroke="#fff" stroke-width="1"/><path d="M5.3 12.2v-1a1.2 1.2 0 0 1 2.4 0v1" fill="none" stroke="#fff" stroke-width="1"/></svg>
 <div class="abs" style="left:24px;top:111.3px;width:148px;height:20px;background:rgba(20,18,12,0.5)"></div>
 <div class="abs lbl" style="left:31px;top:111.3px">ЛарисаФарамазян.Арм...</div>
</div>
<div class="abs" style="left:0px;top:273px;width:199px;height:135px;background:#6b5743;overflow:hidden">
 <svg class="abs" style="left:0;top:0" width="199" height="136" viewBox="0 0 199 136"><g transform="translate(0 0) scale(1.0)" fill="#4e3f30"><path d="M70 45C70 31 78 24 91 23.5C92 19.5 95 18 101 18.3C117 19 128.5 29 128.5 47L128.5 62C128.5 80 116 93 100 93C84 93 70 80 70 62Z"/><ellipse cx="68.5" cy="63" rx="5" ry="10"/><ellipse cx="130" cy="63" rx="5" ry="10"/><path d="M86 84L114 84L114 103C128 107 150 112 152 140L47 140C49 112 72 107 86 103Z"/></g></svg>

 <svg class="abs" style="left:4px;top:111.3px" width="20" height="20" viewBox="0 0 20 20"><rect width="20" height="20" fill="#e0505a"/><path d="M8.5 4.5a2.3 2.3 0 0 1 4.6 0v4.5a2.3 2.3 0 0 1-4.6 0z" fill="none" stroke="#fff" stroke-width="1.1"/><path d="M14.8 9a4 4 0 0 1-4 4.2M10.8 13.2v2.3" fill="none" stroke="#fff" stroke-width="1.1"/><rect x="4.2" y="12.2" width="4.6" height="3.6" rx="0.6" fill="none" stroke="#fff" stroke-width="1"/><path d="M5.3 12.2v-1a1.2 1.2 0 0 1 2.4 0v1" fill="none" stroke="#fff" stroke-width="1"/></svg>
 <div class="abs" style="left:24px;top:111.3px;width:148px;height:20px;background:rgba(20,18,12,0.5)"></div>
 <div class="abs lbl" style="left:31px;top:111.3px">Меруерт Абайдельдано...</div>
</div>
<div class="abs" style="left:200px;top:273px;width:199px;height:135px;background:#3e6e50;overflow:hidden">
 <svg class="abs" style="left:0;top:0" width="199" height="136" viewBox="0 0 199 136"><g transform="translate(0 0) scale(1.0)" fill="#2e533c"><path d="M70 45C70 31 78 24 91 23.5C92 19.5 95 18 101 18.3C117 19 128.5 29 128.5 47L128.5 62C128.5 80 116 93 100 93C84 93 70 80 70 62Z"/><ellipse cx="68.5" cy="63" rx="5" ry="10"/><ellipse cx="130" cy="63" rx="5" ry="10"/><path d="M86 84L114 84L114 103C128 107 150 112 152 140L47 140C49 112 72 107 86 103Z"/></g></svg>

 <svg class="abs" style="left:4px;top:111.3px" width="20" height="20" viewBox="0 0 20 20"><rect width="20" height="20" fill="#e0505a"/><path d="M8.5 4.5a2.3 2.3 0 0 1 4.6 0v4.5a2.3 2.3 0 0 1-4.6 0z" fill="none" stroke="#fff" stroke-width="1.1"/><path d="M14.8 9a4 4 0 0 1-4 4.2M10.8 13.2v2.3" fill="none" stroke="#fff" stroke-width="1.1"/><rect x="4.2" y="12.2" width="4.6" height="3.6" rx="0.6" fill="none" stroke="#fff" stroke-width="1"/><path d="M5.3 12.2v-1a1.2 1.2 0 0 1 2.4 0v1" fill="none" stroke="#fff" stroke-width="1"/></svg>
 <div class="abs" style="left:24px;top:111.3px;width:149px;height:20px;background:rgba(20,18,12,0.5)"></div>
 <div class="abs lbl" style="left:31px;top:111.3px">СанияТоксанова. Казах...</div>
</div>
<div class="abs" style="left:0px;top:410px;width:199px;height:135px;background:#7b6540;overflow:hidden">
 <svg class="abs" style="left:0;top:0" width="199" height="136" viewBox="0 0 199 136"><g transform="translate(0 0) scale(1.0)" fill="#5d4c2f"><path d="M70 45C70 31 78 24 91 23.5C92 19.5 95 18 101 18.3C117 19 128.5 29 128.5 47L128.5 62C128.5 80 116 93 100 93C84 93 70 80 70 62Z"/><ellipse cx="68.5" cy="63" rx="5" ry="10"/><ellipse cx="130" cy="63" rx="5" ry="10"/><path d="M86 84L114 84L114 103C128 107 150 112 152 140L47 140C49 112 72 107 86 103Z"/></g></svg>

 <svg class="abs" style="left:4px;top:111.3px" width="20" height="20" viewBox="0 0 20 20"><rect width="20" height="20" fill="#e0505a"/><path d="M8.5 4.5a2.3 2.3 0 0 1 4.6 0v4.5a2.3 2.3 0 0 1-4.6 0z" fill="none" stroke="#fff" stroke-width="1.1"/><path d="M14.8 9a4 4 0 0 1-4 4.2M10.8 13.2v2.3" fill="none" stroke="#fff" stroke-width="1.1"/><rect x="4.2" y="12.2" width="4.6" height="3.6" rx="0.6" fill="none" stroke="#fff" stroke-width="1"/><path d="M5.3 12.2v-1a1.2 1.2 0 0 1 2.4 0v1" fill="none" stroke="#fff" stroke-width="1"/></svg>
 <div class="abs" style="left:24px;top:111.3px;width:99px;height:20px;background:rgba(20,18,12,0.5)"></div>
 <div class="abs lbl" style="left:31px;top:111.3px">Зауреш Амрина</div>
</div>
<div class="abs" style="left:200px;top:410px;width:199px;height:135px;background:#433f6e;overflow:hidden">
 <svg class="abs" style="left:0;top:0" width="199" height="136" viewBox="0 0 199 136"><g transform="translate(0 0) scale(1.0)" fill="#312e52"><path d="M70 45C70 31 78 24 91 23.5C92 19.5 95 18 101 18.3C117 19 128.5 29 128.5 47L128.5 62C128.5 80 116 93 100 93C84 93 70 80 70 62Z"/><ellipse cx="68.5" cy="63" rx="5" ry="10"/><ellipse cx="130" cy="63" rx="5" ry="10"/><path d="M86 84L114 84L114 103C128 107 150 112 152 140L47 140C49 112 72 107 86 103Z"/></g></svg>

 <svg class="abs" style="left:4px;top:111.3px" width="20" height="20" viewBox="0 0 20 20"><rect width="20" height="20" fill="#e0505a"/><path d="M8.5 4.5a2.3 2.3 0 0 1 4.6 0v4.5a2.3 2.3 0 0 1-4.6 0z" fill="none" stroke="#fff" stroke-width="1.1"/><path d="M14.8 9a4 4 0 0 1-4 4.2M10.8 13.2v2.3" fill="none" stroke="#fff" stroke-width="1.1"/><rect x="4.2" y="12.2" width="4.6" height="3.6" rx="0.6" fill="none" stroke="#fff" stroke-width="1"/><path d="M5.3 12.2v-1a1.2 1.2 0 0 1 2.4 0v1" fill="none" stroke="#fff" stroke-width="1"/></svg>
 <div class="abs" style="left:24px;top:111.3px;width:149px;height:20px;background:rgba(20,18,12,0.5)"></div>
 <div class="abs lbl" style="left:31px;top:111.3px">ЕленаСтряхилева.Росс...</div>
</div>
<div class="abs" style="left:0px;top:547px;width:199px;height:135px;background:#3f7272;overflow:hidden">
 <svg class="abs" style="left:0;top:0" width="199" height="136" viewBox="0 0 199 136"><g transform="translate(0 0) scale(1.0)" fill="#2f5757"><path d="M70 45C70 31 78 24 91 23.5C92 19.5 95 18 101 18.3C117 19 128.5 29 128.5 47L128.5 62C128.5 80 116 93 100 93C84 93 70 80 70 62Z"/><ellipse cx="68.5" cy="63" rx="5" ry="10"/><ellipse cx="130" cy="63" rx="5" ry="10"/><path d="M86 84L114 84L114 103C128 107 150 112 152 140L47 140C49 112 72 107 86 103Z"/></g></svg>

 <svg class="abs" style="left:4px;top:111.3px" width="20" height="20" viewBox="0 0 20 20"><rect width="20" height="20" fill="#e0505a"/><path d="M8.5 4.5a2.3 2.3 0 0 1 4.6 0v4.5a2.3 2.3 0 0 1-4.6 0z" fill="none" stroke="#fff" stroke-width="1.1"/><path d="M14.8 9a4 4 0 0 1-4 4.2M10.8 13.2v2.3" fill="none" stroke="#fff" stroke-width="1.1"/><rect x="4.2" y="12.2" width="4.6" height="3.6" rx="0.6" fill="none" stroke="#fff" stroke-width="1"/><path d="M5.3 12.2v-1a1.2 1.2 0 0 1 2.4 0v1" fill="none" stroke="#fff" stroke-width="1"/></svg>
 <div class="abs" style="left:24px;top:111.3px;width:148px;height:20px;background:rgba(20,18,12,0.5)"></div>
 <div class="abs lbl" style="left:31px;top:111.3px">Нургали Кадиша.Казах...</div>
</div>
<div class="abs" style="left:200px;top:547px;width:199px;height:135px;overflow:hidden;background:#1c2d2a">
 <svg class="abs" style="left:0;top:0" width="199" height="135" viewBox="0 0 199 135">
  <rect x="0" y="0" width="100" height="68" fill="#3a1a1c"/>
  <rect x="100" y="0" width="99" height="68" fill="#1c2d2a"/>
  <rect x="0" y="68" width="100" height="67" fill="#1c2e22"/>
  <rect x="100" y="68" width="99" height="67" fill="#1a2a35"/>
  <g transform="translate(0 1) scale(0.5)" fill="#2a1214"><path d="M70 45C70 31 78 24 91 23.5C92 19.5 95 18 101 18.3C117 19 128.5 29 128.5 47L128.5 62C128.5 80 116 93 100 93C84 93 70 80 70 62Z"/><ellipse cx="68.5" cy="63" rx="5" ry="10"/><ellipse cx="130" cy="63" rx="5" ry="10"/><path d="M86 84L114 84L114 103C128 107 150 112 152 140L47 140C49 112 72 107 86 103Z"/></g><g transform="translate(100 1) scale(0.5)" fill="#152320"><path d="M70 45C70 31 78 24 91 23.5C92 19.5 95 18 101 18.3C117 19 128.5 29 128.5 47L128.5 62C128.5 80 116 93 100 93C84 93 70 80 70 62Z"/><ellipse cx="68.5" cy="63" rx="5" ry="10"/><ellipse cx="130" cy="63" rx="5" ry="10"/><path d="M86 84L114 84L114 103C128 107 150 112 152 140L47 140C49 112 72 107 86 103Z"/></g><g transform="translate(0 69) scale(0.5)" fill="#142219"><path d="M70 45C70 31 78 24 91 23.5C92 19.5 95 18 101 18.3C117 19 128.5 29 128.5 47L128.5 62C128.5 80 116 93 100 93C84 93 70 80 70 62Z"/><ellipse cx="68.5" cy="63" rx="5" ry="10"/><ellipse cx="130" cy="63" rx="5" ry="10"/><path d="M86 84L114 84L114 103C128 107 150 112 152 140L47 140C49 112 72 107 86 103Z"/></g><g transform="translate(100 69) scale(0.5)" fill="#131f29"><path d="M70 45C70 31 78 24 91 23.5C92 19.5 95 18 101 18.3C117 19 128.5 29 128.5 47L128.5 62C128.5 80 116 93 100 93C84 93 70 80 70 62Z"/><ellipse cx="68.5" cy="63" rx="5" ry="10"/><ellipse cx="130" cy="63" rx="5" ry="10"/><path d="M86 84L114 84L114 103C128 107 150 112 152 140L47 140C49 112 72 107 86 103Z"/></g>
  <path d="M40 53 L26 68 L40 83" stroke="#7d7d7d" stroke-width="2" fill="none"/>
  <path d="M159 53 L173 68 L159 83" stroke="#fff" stroke-width="2" fill="none"/>
  <rect x="20" y="117.5" width="15.5" height="5" rx="2.5" fill="#fff"/>
  <rect x="39" y="118" width="14" height="4" rx="2" fill="#5a6560"/><rect x="57" y="118" width="14" height="4" rx="2" fill="#5a6560"/><rect x="75" y="118" width="14" height="4" rx="2" fill="#5a6560"/><rect x="93" y="118" width="14" height="4" rx="2" fill="#5a6560"/><rect x="111" y="118" width="14" height="4" rx="2" fill="#5a6560"/><rect x="129" y="118" width="14" height="4" rx="2" fill="#5a6560"/><rect x="147" y="118" width="14" height="4" rx="2" fill="#5a6560"/><rect x="165" y="118" width="14" height="4" rx="2" fill="#5a6560"/>
 </svg>
</div>
</div>
<!-- MINI WINDOW -->
<div class="abs" style="left:8px;top:551px;width:182px;height:259px;background:#222;overflow:hidden">
 <div class="abs" style="left:0;top:0;width:182px;height:21px;background:#282828"></div>
 <svg class="abs" style="left:8px;top:6px" width="10" height="9" viewBox="0 0 10 9"><path d="M1 2h3M6 2h3M1 7h5M8 7h1" stroke="#888" stroke-width="1"/><circle cx="5" cy="2" r="1.2" fill="none" stroke="#888" stroke-width="0.8"/><circle cx="7" cy="7" r="1.2" fill="none" stroke="#888" stroke-width="0.8"/></svg>
 <div class="abs" style="left:23px;top:5px;font-size:8px;line-height:10px;color:#8a8a8a;white-space:nowrap">bspuonline.ktalk.ru</div>
 <svg class="abs" style="left:166px;top:6px" width="10" height="9" viewBox="0 0 10 9"><rect x="1" y="1.5" width="7" height="6" rx="1" fill="none" stroke="#999" stroke-width="1"/><path d="M8 3.5l1.5-1v4l-1.5-1" fill="#999"/></svg>
 <div class="abs" style="left:0;top:21px;width:182px;height:26px;background:#333"></div>
 <svg class="abs" style="left:16px;top:31px" width="10" height="8" viewBox="0 0 10 8"><rect x="0.5" y="0.5" width="3.8" height="3" rx="1" fill="none" stroke="#ddd" stroke-width="0.9"/><rect x="5.7" y="0.5" width="3.8" height="3" rx="1" fill="none" stroke="#ddd" stroke-width="0.9"/><rect x="0.5" y="4.5" width="3.8" height="3" rx="1" fill="none" stroke="#ddd" stroke-width="0.9"/><rect x="5.7" y="4.5" width="3.8" height="3" rx="1" fill="none" stroke="#ddd" stroke-width="0.9"/></svg>
 <div class="abs" style="left:11px;top:45.5px;width:20px;height:1.5px;background:#ddd"></div>
 <svg class="abs" style="left:38px;top:29px" width="13" height="11" viewBox="0 0 13 11"><circle cx="5" cy="3.2" r="2.3" fill="none" stroke="#999" stroke-width="0.9"/><path d="M1 10.5a4 4 0 0 1 8 0M9 1.2a2 2 0 1 1 .5 3.8M10.5 6.5a3 3 0 0 1 2 4" fill="none" stroke="#999" stroke-width="0.9"/></svg>
 <div class="abs" style="left:52px;top:27px;font-size:11px;line-height:14px;font-weight:bold;color:#999">67</div>
 <svg class="abs" style="left:75px;top:29px" width="12" height="11" viewBox="0 0 12 11"><path d="M1.5 1.5h9v6.5H5l-2.5 2V8H1.5z" fill="none" stroke="#999" stroke-width="0.9"/></svg>
 <div class="abs" style="left:89px;top:33px;width:3px;height:3px;border-radius:50%;background:#9ec8f5"></div>
 <!-- tiles -->
 <div class="abs" style="left:0;top:110px;width:91px;height:68px;background:#1a8cff"></div>
 <svg class="abs" style="left:2px;top:112px" width="87" height="64" viewBox="0 0 191 127" preserveAspectRatio="none">
  <rect width="191" height="127" fill="#c3bea4"/>
  <rect x="0" y="0" width="18" height="127" fill="#b5b09a"/>
  <rect x="62" y="0" width="8" height="127" fill="#8a7050"/>
  <rect x="70" y="0" width="58" height="127" fill="#cfa878"/>
  <rect x="128" y="0" width="63" height="127" fill="#dfe4ec"/>
  <path d="M105 127 L110 85 C112 75 125 72 140 75 L150 85 L150 127Z" fill="#222226"/>
  <path d="M58 68 C58 45 73 34 92 34 C112 34 125 45 125 68 L120 102 L62 102Z" fill="#c0a070"/>
  <ellipse cx="92" cy="70" rx="21" ry="27" fill="#dcae92"/>
  <path d="M42 127 C45 108 62 98 90 98 C118 98 135 108 140 127Z" fill="#d4d4d4"/>
 </svg>
 <div class="abs" style="left:91px;top:110px;width:91px;height:68px;background:#6d5a45;overflow:hidden"><svg width="91" height="68" viewBox="0 0 199 136"><g fill="#544433"><path d="M70 45C70 31 78 24 91 23.5C92 19.5 95 18 101 18.3C117 19 128.5 29 128.5 47L128.5 62C128.5 80 116 93 100 93C84 93 70 80 70 62Z"/><ellipse cx="68.5" cy="63" rx="5" ry="10"/><ellipse cx="130" cy="63" rx="5" ry="10"/><path d="M86 84L114 84L114 103C128 107 150 112 152 140L47 140C49 112 72 107 86 103Z"/></g></svg></div>
 <div class="abs" style="left:0;top:178px;width:91px;height:68px;background:#3e6b55;overflow:hidden"><svg width="91" height="68" viewBox="0 0 199 136"><g fill="#30543f"><path d="M70 45C70 31 78 24 91 23.5C92 19.5 95 18 101 18.3C117 19 128.5 29 128.5 47L128.5 62C128.5 80 116 93 100 93C84 93 70 80 70 62Z"/><ellipse cx="68.5" cy="63" rx="5" ry="10"/><ellipse cx="130" cy="63" rx="5" ry="10"/><path d="M86 84L114 84L114 103C128 107 150 112 152 140L47 140C49 112 72 107 86 103Z"/></g></svg></div>
 <div class="abs" style="left:91px;top:178px;width:91px;height:68px;background:#7b6540;overflow:hidden"><svg width="91" height="68" viewBox="0 0 199 136"><g fill="#5d4c2f"><path d="M70 45C70 31 78 24 91 23.5C92 19.5 95 18 101 18.3C117 19 128.5 29 128.5 47L128.5 62C128.5 80 116 93 100 93C84 93 70 80 70 62Z"/><ellipse cx="68.5" cy="63" rx="5" ry="10"/><ellipse cx="130" cy="63" rx="5" ry="10"/><path d="M86 84L114 84L114 103C128 107 150 112 152 140L47 140C49 112 72 107 86 103Z"/></g></svg></div>
 <div class="abs" style="left:3px;top:162px;width:15px;height:14px;background:#3aa640"></div>
 <svg class="abs" style="left:5px;top:165px" width="11" height="9" viewBox="0 0 11 9"><rect x="1" y="0.5" width="9" height="6" fill="none" stroke="#fff" stroke-width="0.9"/><path d="M5.5 6.5v2M3 8.5h5" stroke="#fff" stroke-width="0.9"/></svg>
 <div class="abs" style="left:18px;top:162px;width:66px;height:14px;background:rgba(40,40,40,0.45)"></div>
 <div class="abs mlbl" style="left:21px;top:162px">Юлия Серге...</div>
 <div class="abs" style="left:94px;top:162px;width:15px;height:14px;background:#e0505a"></div>
 <svg class="abs" style="left:94px;top:162px" width="15" height="14" viewBox="0 0 15 14"><path d="M5.8 3.2a1.7 1.7 0 0 1 3.4 0v3.3a1.7 1.7 0 0 1-3.4 0z" fill="none" stroke="#fff" stroke-width="0.9"/><path d="M4 6.5a3.5 3.5 0 0 0 7 0M7.5 10v2" fill="none" stroke="#fff" stroke-width="0.9"/><path d="M3.5 2.5l8 8.5" stroke="#fff" stroke-width="0.9"/></svg>
 <div class="abs" style="left:109px;top:162px;width:64px;height:14px;background:rgba(20,18,12,0.5)"></div>
 <div class="abs mlbl" style="left:112px;top:162px">Меруерт Аб...</div>
 <div class="abs" style="left:3px;top:230px;width:15px;height:14px;background:#e0505a"></div>
 <svg class="abs" style="left:3px;top:230px" width="15" height="14" viewBox="0 0 15 14"><path d="M5.8 3.2a1.7 1.7 0 0 1 3.4 0v3.3a1.7 1.7 0 0 1-3.4 0z" fill="none" stroke="#fff" stroke-width="0.9"/><path d="M4 6.5a3.5 3.5 0 0 0 7 0M7.5 10v2" fill="none" stroke="#fff" stroke-width="0.9"/><path d="M3.5 2.5l8 8.5" stroke="#fff" stroke-width="0.9"/></svg>
 <div class="abs" style="left:18px;top:230px;width:68px;height:14px;background:rgba(20,18,12,0.5)"></div>
 <div class="abs mlbl" style="left:21px;top:230px">Александр К...</div>
 <div class="abs" style="left:94px;top:230px;width:15px;height:14px;background:#e0505a"></div>
 <svg class="abs" style="left:94px;top:230px" width="15" height="14" viewBox="0 0 15 14"><path d="M5.8 3.2a1.7 1.7 0 0 1 3.4 0v3.3a1.7 1.7 0 0 1-3.4 0z" fill="none" stroke="#fff" stroke-width="0.9"/><path d="M4 6.5a3.5 3.5 0 0 0 7 0M7.5 10v2" fill="none" stroke="#fff" stroke-width="0.9"/><path d="M3.5 2.5l8 8.5" stroke="#fff" stroke-width="0.9"/></svg>
 <div class="abs" style="left:109px;top:230px;width:64px;height:14px;background:rgba(20,18,12,0.5)"></div>
 <div class="abs mlbl" style="left:112px;top:230px">Райкул Дос...</div>
</div>
<!-- TOOLBAR -->
<div id="toolbar" class="abs">
 <svg class="abs" style="left:25px;top:16px" width="22" height="24" viewBox="0 0 22 24"><path d="M11 1.5L16 9.5H6z" fill="none" stroke="#8fbce6" stroke-width="1.5" stroke-linejoin="round"/><rect x="2" y="14" width="8" height="8" rx="1" fill="none" stroke="#8fbce6" stroke-width="1.5"/><circle cx="17" cy="18" r="4.3" fill="none" stroke="#8fbce6" stroke-width="1.5"/></svg>
 <svg class="abs" style="left:71px;top:17px" width="27" height="22" viewBox="0 0 27 22"><circle cx="8.5" cy="5.5" r="4" fill="none" stroke="#8fbce6" stroke-width="1.5"/><circle cx="18.5" cy="6.5" r="3" fill="none" stroke="#8fbce6" stroke-width="1.5"/><path d="M1.5 20a7 7 0 0 1 14 0M17.5 12.3a6 6 0 0 1 7.3 7.7" fill="none" stroke="#8fbce6" stroke-width="1.5" stroke-linecap="round"/></svg>
 <div class="abs" style="left:101px;top:16px;font-size:19.5px;line-height:22px;color:#8fbce6">69</div>
 <svg class="abs" style="left:144px;top:14px" width="26" height="26" viewBox="0 0 26 26"><path d="M14 4H4.5a2 2 0 0 0-2 2v13a2 2 0 0 0 2 2h4l-1.5 3.5 5-3.5h9a2 2 0 0 0 2-2V11" fill="none" stroke="#8fbce6" stroke-width="1.5" stroke-linejoin="round"/></svg>
 <div class="abs" style="left:160px;top:13px;font-size:10px;line-height:10px;color:#d06060">1</div>
 <svg class="abs" style="left:649px;top:16px" width="23" height="24" viewBox="0 0 23 24"><path d="M7 12V5a1.6 1.6 0 0 1 3.2 0v5.5V3a1.6 1.6 0 0 1 3.2 0v7.5V4.5a1.6 1.6 0 0 1 3.2 0V11V7.5a1.6 1.6 0 0 1 3.2 0V15c0 5-3 8-7.5 8-3.5 0-5.5-1.5-7.5-4.5l-3-4.5c-.7-1 .6-2.6 1.8-1.8L7 14.5" fill="none" stroke="#8fbce6" stroke-width="1.5" stroke-linejoin="round" stroke-linecap="round"/></svg>
 <div class="abs" style="left:689px;top:16px;width:1px;height:24px;background:#3a3a3a"></div>
 <svg class="abs" style="left:705px;top:17px" width="26" height="22" viewBox="0 0 26 22"><rect x="2" y="1.5" width="22" height="14" rx="2" fill="none" stroke="#8fbce6" stroke-width="1.6"/><path d="M13 15.5v4M7 20h12" stroke="#8fbce6" stroke-width="1.6"/></svg>
 <svg class="abs" style="left:754px;top:17px" width="22" height="23" viewBox="0 0 22 23"><path d="M8 4.5a3 3 0 0 1 6 0v6a3 3 0 0 1-6 0z" fill="none" stroke="#e06868" stroke-width="1.5"/><path d="M4 10a7 7 0 0 0 14 0M11 17v5" fill="none" stroke="#e06868" stroke-width="1.5"/><path d="M2 2l18 18" stroke="#e06868" stroke-width="1.5"/></svg>
 <svg class="abs" style="left:797px;top:17px" width="29" height="22" viewBox="0 0 29 22"><rect x="4" y="2" width="16" height="16" rx="2" fill="none" stroke="#e06868" stroke-width="1.6"/><path d="M20 8l6.5-4.5v14L20 13" fill="none" stroke="#e06868" stroke-width="1.6" stroke-linejoin="round"/><path d="M8 6.5L15.5 20.5H0.5z" fill="#2b2b2b" stroke="#2b2b2b" stroke-width="3" stroke-linejoin="round"/><path d="M8 7.5L14.5 19.5H1.5z" fill="none" stroke="#f0c890" stroke-width="1.6" stroke-linejoin="round"/><path d="M8 11.5v3.5M8 16.5v1" stroke="#f0c890" stroke-width="1.5"/></svg>
 <svg class="abs" style="left:847px;top:17px" width="23" height="23" viewBox="0 0 23 23"><circle cx="11.5" cy="11.5" r="9.5" fill="none" stroke="#b24e50" stroke-width="1.6"/></svg>
 <div class="abs" style="left:887px;top:16px;width:1px;height:24px;background:#3a3a3a"></div>
 <svg class="abs" style="left:904px;top:17px" width="24" height="23" viewBox="0 0 24 23"><path d="M20 4.5c-1-2-3-3-4-2l-2 2c-1 1 0 2.5 1 3.5l-6 6c-1-1-2.5-2-3.5-1l-2 2c-1 1 0 3 2 4 5 2 14-7 14.5-14.5" fill="none" stroke="#e06868" stroke-width="1.6" stroke-linejoin="round"/></svg>
 <svg class="abs" style="left:940px;top:23px" width="12" height="8" viewBox="0 0 12 8"><path d="M1.5 6.5L6 2l4.5 4.5" fill="none" stroke="#e06868" stroke-width="1.6"/></svg>
 <svg class="abs" style="left:1490px;top:19px" width="27" height="18" viewBox="0 0 27 18"><rect x="1.5" y="1.5" width="12" height="14.5" rx="1.5" fill="none" stroke="#8fbce6" stroke-width="1.6"/><rect x="17.5" y="2" width="7" height="5" rx="2" fill="none" stroke="#8fbce6" stroke-width="1.6"/><rect x="17.5" y="10.5" width="7" height="5" rx="2" fill="none" stroke="#8fbce6" stroke-width="1.6"/></svg>
 <div class="abs" style="left:1550px;top:13px;width:30px;height:30px;border-radius:50%;background:#2f2f2f"></div>
 <div class="abs" style="left:1559px;top:18px;font-size:19px;line-height:20px;color:#9a9a9a">?</div>
</div>
<!-- TASKBAR -->
<div id="taskbar" class="abs">
 <svg class="abs" style="left:13px;top:10px" width="15" height="15" viewBox="0 0 15 15"><path d="M0 2l6-.9V7H0zM7 1l8-1.2V7H7zM0 8h6v5.9L0 13zM7 8h8v7.2l-8-1.2z" fill="#fff"/></svg>
 <svg class="abs" style="left:50px;top:8px" width="20" height="19" viewBox="0 0 20 19"><circle cx="11.5" cy="7.5" r="6" fill="none" stroke="#fff" stroke-width="1.6"/><path d="M7.3 11.7L1.5 17.5" stroke="#fff" stroke-width="1.8"/></svg>
 <svg class="abs" style="left:92px;top:10px" width="16" height="14" viewBox="0 0 16 14"><rect x="1.5" y="3" width="9" height="8" fill="none" stroke="#fff" stroke-width="1.3"/><path d="M1 1h11M1 13h11M13.5 1v2M13.5 5v8" stroke="#fff" stroke-width="1.3"/></svg>
 <svg class="abs" style="left:132px;top:7px" width="21" height="20" viewBox="0 0 21 20"><path d="M10.5 1A9.5 9.5 0 0 0 1 10.5c0 5 4 8.5 8.5 8.5 3 0 5.5-1.3 7-3.5-2.5 1.2-7 .5-7.5-3-.3-2 1.5-3.5 4-3.5 3 0 5 1.5 6 3 1-6-3.5-11-8.5-11z" fill="#1ea0e8"/><path d="M1 10.5c1-4 5-5.5 8-5 3 .5 5 2 5.5 4-2-.5-5 0-5.5 2.5-.5 3 2 6 6.5 5.5C12 20 4.5 20 1 10.5z" fill="#0c60b8"/><path d="M13 8c3 0 5.8 1.5 6.8 4 .8-3-.3-7-3-9-2-1-5-1.5-7 0 1 .5 2.5 2 3.2 5z" fill="#4cd080"/></svg>
 <svg class="abs" style="left:174px;top:10px" width="19" height="15" viewBox="0 0 19 15"><path d="M0 1h7l1.5 1.5H19V15H0z" fill="#f1c24d"/><rect x="0" y="4" width="19" height="11" fill="#fbd35e"/><rect x="6" y="9" width="7" height="6" fill="#2a74d0"/><rect x="7.5" y="11" width="4" height="4" fill="#fbd35e"/></svg>
 <div class="abs" style="left:167px;top:32px;width:33px;height:2px;background:#76b9ed"></div>
 <svg class="abs" style="left:215px;top:11px" width="18" height="12" viewBox="0 0 18 12"><rect width="18" height="12" fill="#3a8fd8"/><rect x="1.5" y="1.5" width="15" height="9" fill="#9fd0f5"/><circle cx="6" cy="5.5" r="3" fill="#2a6fc0"/><path d="M6 5.5V2.5A3 3 0 0 1 9 5.5z" fill="#f0c040"/><path d="M11 3h4M11 5h4M11 7h4" stroke="#2a6fc0" stroke-width="1"/></svg>
 <div class="abs" style="left:245px;top:0;width:40px;height:34px;background:#5a6466"></div>
 <div class="abs" style="left:245px;top:32px;width:40px;height:2px;background:#76b9ed"></div>
 <div class="abs" style="left:255px;top:6px;width:20px;height:20px;border-radius:50%;background:#fff"></div>
 <svg class="abs" style="left:258px;top:9px" width="14" height="14" viewBox="0 0 14 14"><path d="M2 2l5 6v5M12 2L7 8" stroke="#f33" stroke-width="2.2" fill="none"/></svg>
 <svg class="abs" style="left:296px;top:8px" width="20" height="19" viewBox="0 0 20 19"><path d="M0 0h20v13l-6 6H0z" fill="#ffd21f"/><path d="M14 19v-6h6z" fill="#333"/></svg>
 <svg class="abs" style="left:1395px;top:14px" width="12" height="7" viewBox="0 0 12 7"><path d="M1 6l5-5 5 5" fill="none" stroke="#fff" stroke-width="1.2"/></svg>
 <svg class="abs" style="left:1413px;top:11px" width="16" height="13" viewBox="0 0 16 13"><path d="M1 4h2.5L7 1v10L3.5 8H1z" fill="none" stroke="#fff" stroke-width="1"/><circle cx="11.5" cy="8.5" r="4" fill="#e02020"/><path d="M10 7l3 3M13 7l-3 3" stroke="#fff" stroke-width="1"/></svg>
 <svg class="abs" style="left:1434px;top:11px" width="15" height="13" viewBox="0 0 15 13"><rect x="4" y="1" width="10" height="7.5" fill="none" stroke="#fff" stroke-width="1"/><path d="M9 8.5v2.5M6 11.5h6M1 2h3M1 2v9M1 6h3" stroke="#fff" stroke-width="1" fill="none"/></svg>
 <svg class="abs" style="left:1454px;top:11px" width="15" height="14" viewBox="0 0 15 14"><path d="M7 0.5l6 2v4.5c0 3-2.5 5.5-6 6.5C3.5 12.5 1 10 1 7V2.5z" fill="#fff"/><path d="M7 0.5v13C3.5 12.5 1 10 1 7h6z" fill="#222"/><circle cx="11" cy="10" r="3.5" fill="#1e9e40"/><path d="M9.5 10l1 1 2-2" stroke="#fff" stroke-width="1" fill="none"/></svg>
 <div class="abs" style="left:1477px;top:10px;font-size:11.5px;line-height:14px;color:#fff;transform:scaleX(0.8);transform-origin:0 0">РУС</div>
 <div class="abs" style="left:1517px;top:3px;font-size:10.5px;line-height:13px;color:#fff;transform:scaleX(0.9);transform-origin:0 0">10:51</div>
 <div class="abs" style="left:1506px;top:18px;font-size:10.5px;line-height:13px;color:#fff;transform:scaleX(0.85);transform-origin:0 0">05.06.2025</div>
 <svg class="abs" style="left:1565px;top:11px" width="15" height="14" viewBox="0 0 15 14"><path d="M0.5 0.5h14v10h-5.5l-1.5 2.5-1.5-2.5H0.5z" fill="#fff"/><path d="M3 3.5h9M3 5.5h9M3 7.5h6" stroke="#38484a" stroke-width="0.9"/></svg>
 <div class="abs" style="left:1596px;top:0;width:1px;height:34px;background:#6a7678"></div>
</div>

</body></html>
